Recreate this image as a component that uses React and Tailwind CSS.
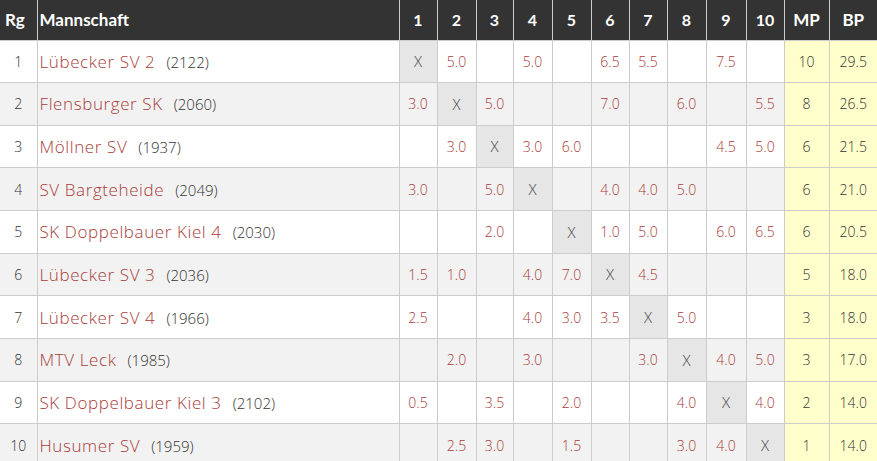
import React from 'react';

const rows = [
    { rg: 1, name: 'Lübecker SV 2', dwz: '2122', res: ['X', '5.0', '', '5.0', '', '6.5', '5.5', '', '7.5', ''], mp: '10', bp: '29.5' },
    { rg: 2, name: 'Flensburger SK', dwz: '2060', res: ['3.0', 'X', '5.0', '', '', '7.0', '', '6.0', '', '5.5'], mp: '8', bp: '26.5' },
    { rg: 3, name: 'Möllner SV', dwz: '1937', res: ['', '3.0', 'X', '3.0', '6.0', '', '', '', '4.5', '5.0'], mp: '6', bp: '21.5' },
    { rg: 4, name: 'SV Bargteheide', dwz: '2049', res: ['3.0', '', '5.0', 'X', '', '4.0', '4.0', '5.0', '', ''], mp: '6', bp: '21.0' },
    { rg: 5, name: 'SK Doppelbauer Kiel 4', dwz: '2030', res: ['', '', '2.0', '', 'X', '1.0', '5.0', '', '6.0', '6.5'], mp: '6', bp: '20.5' },
    { rg: 6, name: 'Lübecker SV 3', dwz: '2036', res: ['1.5', '1.0', '', '4.0', '7.0', 'X', '4.5', '', '', ''], mp: '5', bp: '18.0' },
    { rg: 7, name: 'Lübecker SV 4', dwz: '1966', res: ['2.5', '', '', '4.0', '3.0', '3.5', 'X', '5.0', '', ''], mp: '3', bp: '18.0' },
    { rg: 8, name: 'MTV Leck', dwz: '1985', res: ['', '2.0', '', '3.0', '', '', '3.0', 'X', '4.0', '5.0'], mp: '3', bp: '17.0' },
    { rg: 9, name: 'SK Doppelbauer Kiel 3', dwz: '2102', res: ['0.5', '', '3.5', '', '2.0', '', '', '4.0', 'X', '4.0'], mp: '2', bp: '14.0' },
    { rg: 10, name: 'Husumer SV', dwz: '1959', res: ['', '2.5', '3.0', '', '1.5', '', '', '3.0', '4.0', 'X'], mp: '1', bp: '14.0' },
];

const colWidths = [37, 362, 38, 39, 37, 39, 39, 38, 38, 39, 40, 38, 45, 48];

export default function App() {
    return (
        <div className="w-[877px] h-[461px] overflow-hidden bg-white font-['Open_Sans',sans-serif] font-light">
            <table className="table-fixed border-collapse w-[877px]">
                <colgroup>
                    {colWidths.map((w, i) => (
                        <col key={i} style={{ width: w }} />
                    ))}
                </colgroup>
                <thead>
                    <tr className="h-[40px] bg-[#333333] text-white font-bold text-[16px] font-['Lato',sans-serif]">
                        <th className="text-left pl-[5px] text-[17px]">Rg</th>
                        <th className="text-left pl-[2px] text-[17px] border-l border-[#cccccc]">Mannschaft</th>
                        {[1, 2, 3, 4, 5, 6, 7, 8, 9, 10].map((n) => (
                            <th key={n} className="text-center border-l border-[#cccccc]">{n}</th>
                        ))}
                        <th className="text-center border-l border-[#cccccc] text-[17px]">MP</th>
                        <th className="text-center border-l border-[#cccccc] text-[17px]">BP</th>
                    </tr>
                </thead>
                <tbody>
                    {rows.map((r, idx) => (
                        <tr key={r.rg} className={`h-[42.67px] border-t border-[#cccccc] ${idx % 2 === 0 ? 'bg-white' : 'bg-[#f2f2f2]'}`}>
                            <td className="text-center text-[14px] text-[#333333]">{r.rg}</td>
                            <td className="pl-[2px] border-l border-[#cccccc] whitespace-nowrap">
                                <span className="text-[17px] tracking-[0.6px] text-[#a83c38]">{r.name}</span>
                                <span className="ml-[11px] text-[15px] text-[#333333]">({r.dwz})</span>
                            </td>
                            {r.res.map((v, i) =>
                                v === 'X' ? (
                                    <td key={i} className="text-center border-l border-[#cccccc] bg-[#e6e6e6] text-[15px] text-[#444444]">X</td>
                                ) : (
                                    <td key={i} className="text-center border-l border-[#cccccc] text-[14px] text-[#a83c38]">{v}</td>
                                )
                            )}
                            <td className="text-center border-l border-[#cccccc] bg-[#ffffcc] text-[14px] text-[#333333]">{r.mp}</td>
                            <td className="text-center border-l border-[#cccccc] bg-[#ffffcc] text-[14px] text-[#333333]">{r.bp}</td>
                        </tr>
                    ))}
                </tbody>
            </table>
        </div>
    );
}
